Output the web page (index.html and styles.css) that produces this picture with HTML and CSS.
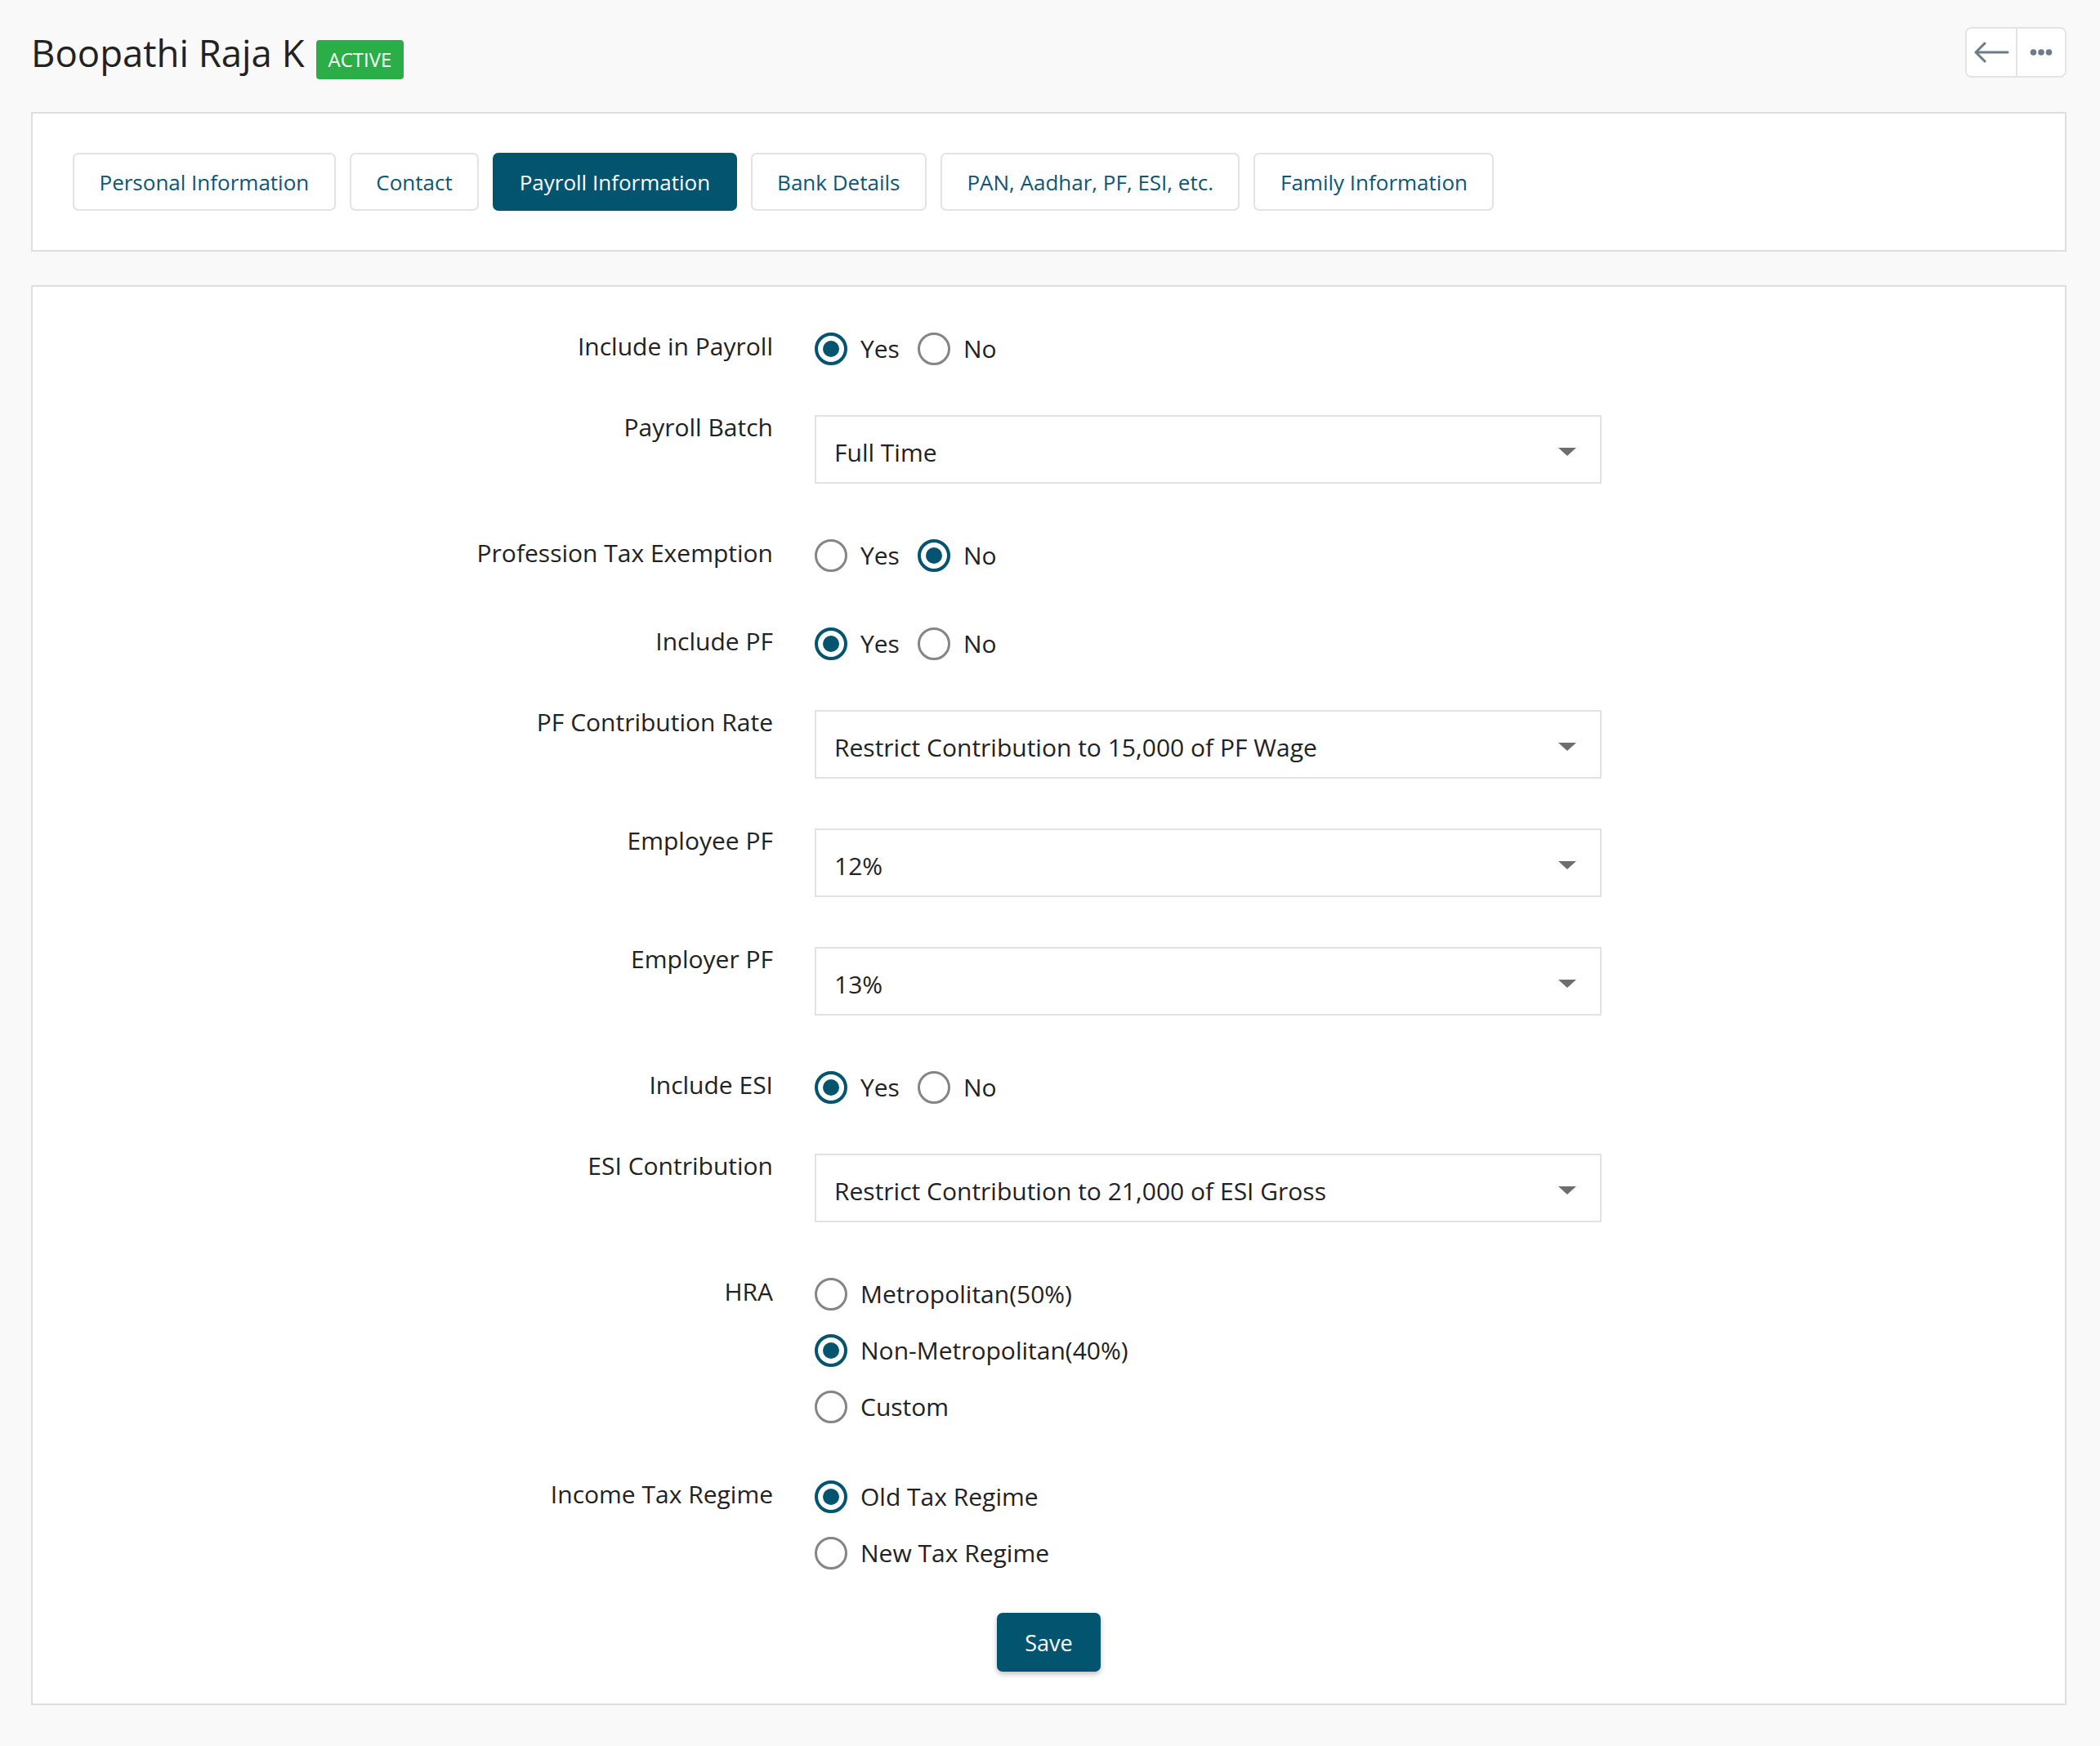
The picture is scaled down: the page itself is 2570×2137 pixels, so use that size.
FILE: index.html
```html
<!DOCTYPE html>
<html lang="en">
<head>
<meta charset="utf-8">
<title>Boopathi Raja K - Payroll Information</title>
<link rel="stylesheet" href="styles.css">
</head>
<body>
<div class="page">
  <header class="header">
    <div class="title-wrap">
      <h1 class="title">Boopathi Raja K</h1>
      <span class="badge">ACTIVE</span>
    </div>
    <div class="actions">
      <button class="act" aria-label="Back">
        <svg width="44" height="26" viewBox="0 0 44 26"><path d="M42 13H3M14 2L3 13l11 11" fill="none" stroke="#6c7a89" stroke-width="3" stroke-linecap="round" stroke-linejoin="round"/></svg>
      </button>
      <button class="act" aria-label="More">
        <svg width="28" height="10" viewBox="0 0 28 10"><circle cx="4.5" cy="5" r="3.8" fill="#6c7a89"/><circle cx="14" cy="5" r="3.8" fill="#6c7a89"/><circle cx="23.5" cy="5" r="3.8" fill="#6c7a89"/></svg>
      </button>
    </div>
  </header>

  <nav class="tab-card">
    <div class="tabs">
      <span class="tab">Personal Information</span>
      <span class="tab">Contact</span>
      <span class="tab active">Payroll Information</span>
      <span class="tab">Bank Details</span>
      <span class="tab">PAN, Aadhar, PF, ESI, etc.</span>
      <span class="tab">Family Information</span>
    </div>
  </nav>

  <section class="form-card">
    <div class="row radio-row">
      <div class="label">Include in Payroll</div>
      <div class="opts">
        <label class="opt"><span class="radio on"></span>Yes</label>
        <label class="opt"><span class="radio"></span>No</label>
      </div>
    </div>

    <div class="row">
      <div class="label">Payroll Batch</div>
      <div class="select"><span>Full Time</span><span class="caret"></span></div>
    </div>

    <div class="row radio-row">
      <div class="label">Profession Tax Exemption</div>
      <div class="opts">
        <label class="opt"><span class="radio"></span>Yes</label>
        <label class="opt"><span class="radio on"></span>No</label>
      </div>
    </div>

    <div class="row radio-row">
      <div class="label">Include PF</div>
      <div class="opts">
        <label class="opt"><span class="radio on"></span>Yes</label>
        <label class="opt"><span class="radio"></span>No</label>
      </div>
    </div>

    <div class="row">
      <div class="label">PF Contribution Rate</div>
      <div class="select"><span>Restrict Contribution to 15,000 of PF Wage</span><span class="caret"></span></div>
    </div>

    <div class="row">
      <div class="label">Employee PF</div>
      <div class="select"><span>12%</span><span class="caret"></span></div>
    </div>

    <div class="row">
      <div class="label">Employer PF</div>
      <div class="select"><span>13%</span><span class="caret"></span></div>
    </div>

    <div class="row radio-row">
      <div class="label">Include ESI</div>
      <div class="opts">
        <label class="opt"><span class="radio on"></span>Yes</label>
        <label class="opt"><span class="radio"></span>No</label>
      </div>
    </div>

    <div class="row">
      <div class="label">ESI Contribution</div>
      <div class="select"><span>Restrict Contribution to 21,000 of ESI Gross</span><span class="caret"></span></div>
    </div>

    <div class="row radio-row hra">
      <div class="label">HRA</div>
      <div class="opts stack">
        <label class="opt"><span class="radio"></span>Metropolitan(50%)</label>
        <label class="opt"><span class="radio on"></span>Non-Metropolitan(40%)</label>
        <label class="opt"><span class="radio"></span>Custom</label>
      </div>
    </div>

    <div class="row radio-row last">
      <div class="label">Income Tax Regime</div>
      <div class="opts stack">
        <label class="opt"><span class="radio on"></span>Old Tax Regime</label>
        <label class="opt"><span class="radio"></span>New Tax Regime</label>
      </div>
    </div>

    <div class="save-wrap">
      <button class="save">Save</button>
    </div>
  </section>
</div>
</body>
</html>
```

FILE: styles.css
```css
* { box-sizing: border-box; }

body {
  margin: 0;
  background: #f9f9f9;
  font-family: "Open Sans", "Noto Sans", sans-serif;
  color: #222;
}

.page {
  padding: 33px 41px 40px 38px;
}

/* Header */
.header {
  display: flex;
  justify-content: space-between;
  align-items: flex-start;
  height: 62px;
  margin-bottom: 42px;
}

.title-wrap {
  display: flex;
  align-items: baseline;
  gap: 14px;
  margin-top: 1px;
}

.title {
  margin: 0;
  font-size: 45.5px;
  font-weight: 400;
  line-height: 61px;
  color: #222;
}

.badge {
  background: #2bae48;
  color: #fff;
  font-size: 24px;
  line-height: 48px;
  padding: 0 15px;
  border-radius: 4px;
}

.actions {
  display: flex;
  border: 2px solid #e4e4e4;
  border-radius: 8px;
  background: #fff;
  overflow: hidden;
}

.act {
  width: 60px;
  height: 58px;
  border: 0;
  padding: 0;
  background: #fff;
  display: flex;
  align-items: center;
  justify-content: center;
}

.act + .act {
  border-left: 2px solid #e4e4e4;
}

/* Tabs */
.tab-card {
  background: #fff;
  border: 2px solid #dedede;
  padding: 48px 49px;
}

.tabs {
  display: flex;
  gap: 17px;
}

.tab {
  height: 71px;
  padding: 0 30.5px;
  border: 2px solid #e3e3e3;
  border-radius: 7px;
  background: #fff;
  color: #0d5677;
  font-size: 26px;
  display: flex;
  align-items: center;
  white-space: nowrap;
}

.tab.active {
  background: #02546f;
  border-color: #02546f;
  color: #fff;
}

/* Form */
.form-card {
  margin-top: 41px;
  background: #fff;
  border: 2px solid #dedede;
  padding: 49px 0 39px;
}

.row {
  display: grid;
  grid-template-columns: 906px 963px;
  column-gap: 51px;
  margin-bottom: 61px;
}

.row.hra {
  margin-bottom: 63px;
}

.row.last {
  margin-bottom: 53px;
}

.label {
  font-size: 30px;
  line-height: 30px;
  text-align: right;
  color: #222;
  white-space: nowrap;
}

.radio-row .label {
  padding-top: 9px;
}

.opts {
  display: flex;
  gap: 22px;
  padding-top: 7px;
}

.opts.stack {
  flex-direction: column;
  gap: 29px;
}

.opt {
  display: flex;
  align-items: center;
  gap: 16px;
  height: 40px;
  font-size: 30px;
  line-height: 40px;
  color: #222;
  white-space: nowrap;
}

.radio {
  flex: none;
  width: 40px;
  height: 40px;
  border-radius: 50%;
  border: 3px solid #858585;
  background: #fff;
  display: flex;
  align-items: center;
  justify-content: center;
}

.radio.on {
  border: 4px solid #02546f;
}

.radio.on::after {
  content: "";
  width: 20px;
  height: 20px;
  border-radius: 50%;
  background: #02546f;
}

.select {
  height: 84px;
  border: 2px solid #e2e2e2;
  background: #fff;
  display: flex;
  align-items: center;
  justify-content: space-between;
  padding: 6px 29px 0 22px;
  font-size: 30px;
  color: #222;
  white-space: nowrap;
}

.caret {
  width: 0;
  height: 0;
  border-left: 11px solid transparent;
  border-right: 11px solid transparent;
  border-top: 10px solid #6e6e6e;
}

.save-wrap {
  display: flex;
  justify-content: center;
}

.save {
  width: 127px;
  height: 72px;
  background: #02546f;
  color: #fff;
  border: 0;
  border-radius: 7px;
  font-family: inherit;
  font-size: 27px;
  box-shadow: 0 3px 6px rgba(0, 0, 0, 0.25);
}
```
